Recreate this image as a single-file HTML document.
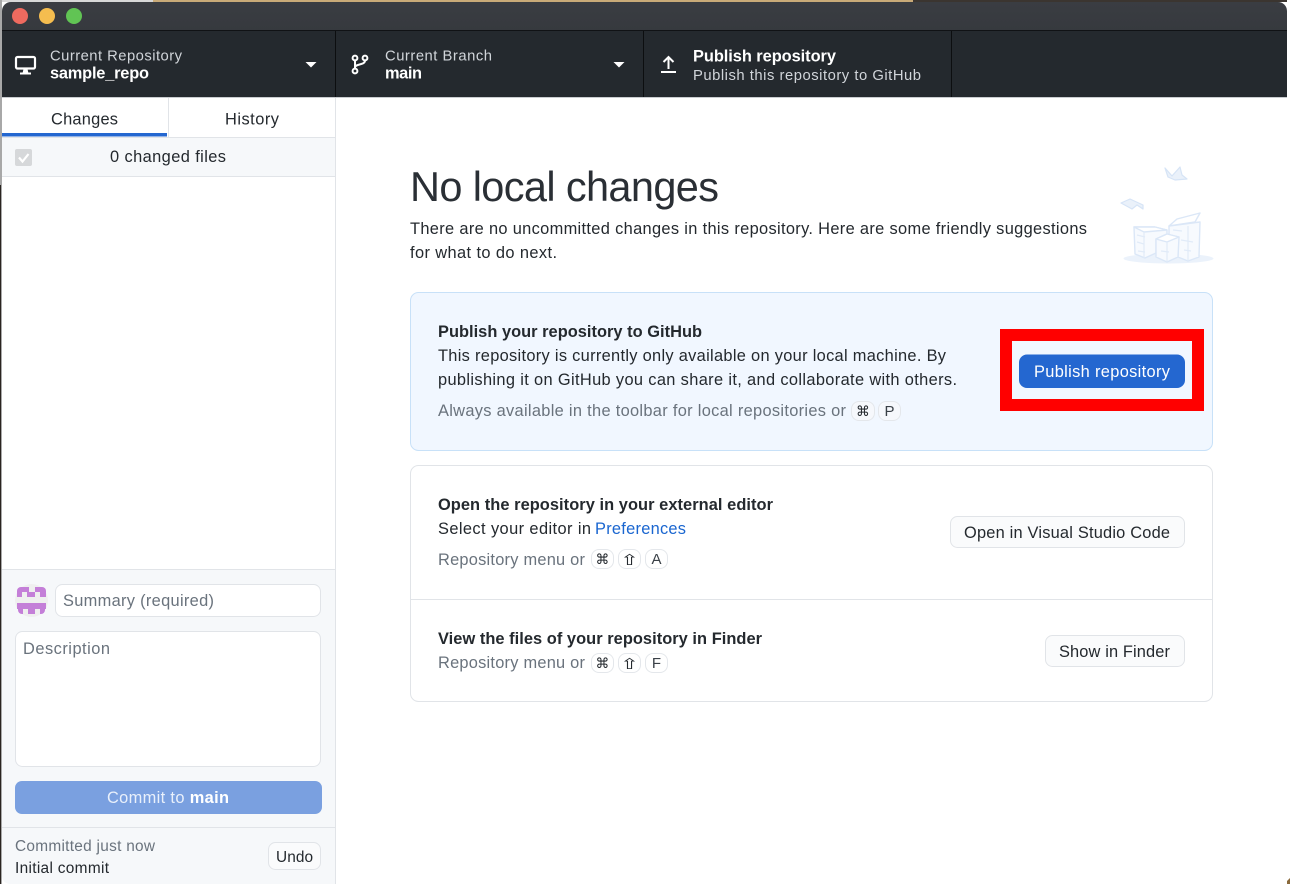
<!DOCTYPE html>
<html lang="en">
<head>
<meta charset="utf-8">
<title>GitHub Desktop</title>
<style>
html,body{margin:0;padding:0;background:#fff;width:1290px;height:884px;overflow:hidden}
svg{display:block;position:absolute;left:0;top:0}
text{font-family:"Liberation Sans","DejaVu Sans",sans-serif;font-size:16.4px;fill:#24292e}
.b{font-weight:700}
.g{fill:#6a737d}
.w{fill:#fff}
.l{fill:#d1d5da}
.k{font-size:14px;text-anchor:middle;font-family:"DejaVu Sans","Liberation Sans",sans-serif}
.s{font-size:15px;font-family:"Liberation Sans",sans-serif;fill:#3a4047;text-anchor:middle}
</style>
</head>
<body>
<svg width="1290" height="884" viewBox="0 0 1290 884" xmlns="http://www.w3.org/2000/svg">
<defs>
<linearGradient id="tb" x1="0" y1="0" x2="0" y2="1"><stop offset="0" stop-color="#3a3d42"/><stop offset="1" stop-color="#2d3035"/></linearGradient>
</defs>
<!-- desktop strip behind window -->
<rect x="0" y="0" width="153" height="2" fill="#d8d8d8"/>
<rect x="153" y="0" width="760" height="2" fill="#c9aa78"/>
<rect x="913" y="0" width="374" height="2" fill="#3b3530"/>
<rect x="0" y="0" width="2" height="884" fill="#a8a8a8"/>
<rect x="0" y="185" width="1" height="699" fill="#2a2420"/>
<path d="M1284 884l6-6v6Z" fill="#8a6a3c"/>
<!-- window -->
<path d="M2 11a9 9 0 0 1 9-9H1278a9 9 0 0 1 9 9V98H2Z" fill="url(#tb)"/>
<rect x="2" y="30" width="1285" height="1" fill="#101215"/>
<rect x="2" y="31" width="1285" height="66" fill="#24292e"/>
<rect x="2" y="97" width="1285" height="1" fill="#c9ccd0"/>
<path d="M2 98H1287V884H10a8 8 0 0 1-8-8Z" fill="#fff"/>
<circle cx="20" cy="16" r="8" fill="#ee6a5f"/>
<circle cx="47" cy="16" r="8" fill="#f5bd4f"/>
<circle cx="74" cy="16" r="8" fill="#61c454"/>
<rect x="335" y="31" width="1" height="66" fill="#0c0e10"/>
<rect x="643" y="31" width="1" height="66" fill="#0c0e10"/>
<rect x="951" y="31" width="1" height="66" fill="#0c0e10"/>

<!-- repo toolbar -->
<g fill="none" stroke="#fff" stroke-width="2.200">
<rect x="16" y="57" width="19" height="11.500" rx="1.500"/>
</g>
<path d="M23.500 69h4l.8 3.500h2.700v2h-11v-2h2.700Z" fill="#fff"/>
<text x="50" y="60.500" class="l" textLength="132" lengthAdjust="spacing" style="font-size:14.800px">Current Repository</text>
<text x="50" y="78.500" class="w b" textLength="99" lengthAdjust="spacing">sample_repo</text>
<path d="M305.500 62h11l-5.500 5.500Z" fill="#fff"/>

<!-- branch toolbar -->
<g fill="none" stroke="#fff" stroke-width="2">
<circle cx="355" cy="58" r="2.400"/>
<circle cx="365" cy="58" r="2.400"/>
<circle cx="355" cy="71" r="2.400"/>
<path d="M355 60.500v8M365 60.500c0 5-10 3-10 7"/>
</g>
<text x="385" y="60.500" class="l" textLength="107" lengthAdjust="spacing" style="font-size:14.800px">Current Branch</text>
<text x="385" y="78.500" class="w b" textLength="37" lengthAdjust="spacing">main</text>
<path d="M613.500 62h11l-5.500 5.500Z" fill="#fff"/>

<!-- publish toolbar -->
<path d="M668.500 69V57M663.500 62l5-5 5 5" fill="none" stroke="#fff" stroke-width="2"/>
<rect x="661" y="71" width="15" height="2" fill="#fff"/>
<text x="693" y="61.500" class="w b" textLength="143" lengthAdjust="spacing">Publish repository</text>
<text x="693" y="80" class="l" textLength="228" lengthAdjust="spacing" style="font-size:14.800px">Publish this repository to GitHub</text>

<!-- sidebar -->
<rect x="335" y="98" width="1" height="786" fill="#e1e4e8"/>
<rect x="168" y="98" width="1" height="39" fill="#e1e4e8"/>
<rect x="2" y="133" width="165" height="3.500" fill="#2467d0"/>
<rect x="2" y="137" width="333" height="1" fill="#e1e4e8"/>
<rect x="2" y="138" width="333" height="38" fill="#f6f8fa"/>
<rect x="2" y="176" width="333" height="1" fill="#e1e4e8"/>
<text x="51" y="124.500" textLength="67" lengthAdjust="spacing">Changes</text>
<text x="225" y="124.500" textLength="54" lengthAdjust="spacing">History</text>
<rect x="15" y="149" width="17" height="17" rx="2" fill="#d6d8da"/>
<path d="M19 157.500l3.500 4 6-7.500" fill="none" stroke="#fff" stroke-width="2.200"/>
<text x="110" y="162" textLength="116" lengthAdjust="spacing">0 changed files</text>

<!-- commit area -->
<path d="M2 569H335V884H10a8 8 0 0 1-8-8Z" fill="#f6f8fa"/>
<rect x="2" y="569" width="333" height="1" fill="#e1e4e8"/>
<circle cx="31.500" cy="600.500" r="16.500" fill="#efefef"/>
<g fill="#c47fd8">
<path d="M23 587h6v5h-12v-1a4 4 0 0 1 4-4Z"/>
<path d="M35 587h7a4 4 0 0 1 4 4v1h-11Z"/>
<rect x="17" y="592" width="5" height="5"/>
<rect x="27" y="592" width="8" height="5"/>
<rect x="40" y="592" width="6" height="5"/>
<rect x="17" y="603" width="29" height="6"/>
<path d="M18 609h5v5h-1a4 4 0 0 1-4-4Z"/>
<rect x="28" y="609" width="7" height="5"/>
<path d="M40 609h5v1a4 4 0 0 1-4 4h-1Z"/>
</g>
<rect x="55.500" y="584.500" width="265" height="32" rx="7" fill="#fff" stroke="#e1e4e8"/>
<text x="63" y="606" class="g" textLength="151" lengthAdjust="spacing">Summary (required)</text>
<rect x="15.500" y="631.500" width="305" height="135" rx="7" fill="#fff" stroke="#e1e4e8"/>
<text x="23" y="654" class="g" textLength="87" lengthAdjust="spacing">Description</text>
<rect x="15" y="781" width="307" height="33" rx="7" fill="#7aa0e0"/>
<text x="107" y="803" style="fill:#e9f0fb" textLength="122" lengthAdjust="spacing">Commit to <tspan class="b" style="fill:#fff">main</tspan></text>
<rect x="2" y="827" width="333" height="1" fill="#e1e4e8"/>
<text x="15" y="851" class="g" textLength="140" lengthAdjust="spacing" style="font-size:15.400px">Committed just now</text>
<text x="15" y="873" textLength="94" lengthAdjust="spacing" style="font-size:15.400px">Initial commit</text>
<rect x="268.500" y="842.500" width="52" height="27" rx="7" fill="#fafbfc" stroke="#e1e4e8"/>
<text x="276" y="862" textLength="37" lengthAdjust="spacing" style="font-size:15.400px">Undo</text>

<!-- main heading -->
<text x="410" y="201" textLength="309" lengthAdjust="spacing" style="font-size:41.500px;fill:#2a2f35">No local changes</text>
<text x="410" y="234" textLength="677" lengthAdjust="spacing">There are no uncommitted changes in this repository. Here are some friendly suggestions</text>
<text x="410" y="258" textLength="147" lengthAdjust="spacing">for what to do next.</text>

<!-- illustration -->
<ellipse cx="1168.500" cy="258.500" rx="45" ry="5" fill="#ebf2fb"/>
<g fill="#f7fafe" stroke="#dbe7f7" stroke-width="1.400" stroke-linejoin="round">
<path d="M1169 226l8-7 23-6-5 9Z" fill="#fff"/>
<path d="M1169 226l31-4-1 35-11 4-10-4v-18l-9-3Z"/>
<path d="M1134 227l21 0 12 3v4l-11 5v14l-11 5-10-4Z"/>
<path d="M1134 227l10 5 23-2-12-3Z" fill="#fff"/>
<path d="M1156 239l11-5 12 3-1 20-11 5-11-5Z"/>
<path d="M1156 239l11 3 12-5-12-3Z" fill="#fff"/>
</g>
<g fill="#eaf1fa" stroke="#d6e4f6" stroke-width="1.200" stroke-linejoin="round">
<path d="M1165 168l7 8 8-9 2 8 5 4-12 1-7-3Z"/>
<path d="M1121 203l9-4 13 6v4l-6-4-5 4Z"/>
</g>
<g fill="none" stroke="#e1ebf8" stroke-width="1.200">
<path d="M1137 235l8 2M1137 242l7 2M1138 251l7 1M1173 230l9 1M1181 240l12 2M1184 250l7 1M1161 251l8 1"/>
<path d="M1144 232v26M1167 242v20M1188 226v35"/>
</g>

<!-- publish card -->
<rect x="410.500" y="292.500" width="802" height="158" rx="8" fill="#f1f7ff" stroke="#c8e1f8"/>
<text x="438" y="337" class="b" textLength="264" lengthAdjust="spacing">Publish your repository to GitHub</text>
<text x="438" y="361" textLength="508" lengthAdjust="spacing">This repository is currently only available on your local machine. By</text>
<text x="438" y="385" textLength="519" lengthAdjust="spacing">publishing it on GitHub you can share it, and collaborate with others.</text>
<text x="438" y="416" class="g" textLength="408" lengthAdjust="spacing">Always available in the toolbar for local repositories or</text>
<rect x="851.500" y="401.500" width="23" height="19" rx="7.500" fill="#f6f8fc" stroke="#e4e7eb"/>
<text x="863" y="416" class="k">⌘</text>
<rect x="878.500" y="401.500" width="22" height="19" rx="7.500" fill="#f6f8fc" stroke="#e4e7eb"/>
<text x="889.500" y="416" class="s">P</text>

<!-- red annotation -->
<rect x="1006" y="335" width="192" height="70" fill="#f1f7ff" stroke="#ff0000" stroke-width="12"/>
<rect x="1019" y="354.500" width="166" height="33.500" rx="8" fill="#2467d0"/>
<text x="1034" y="377" class="w" textLength="136" lengthAdjust="spacing">Publish repository</text>

<!-- actions card -->
<rect x="410.500" y="465.500" width="802" height="236" rx="8" fill="#fff" stroke="#e1e4e8"/>
<rect x="411" y="599" width="801" height="1" fill="#e1e4e8"/>
<text x="438" y="510" class="b" textLength="335" lengthAdjust="spacing">Open the repository in your external editor</text>
<text x="438" y="534" textLength="153" lengthAdjust="spacing">Select your editor in</text>
<text x="595" y="534" textLength="91" lengthAdjust="spacing" style="fill:#1a66d0">Preferences</text>
<text x="438" y="565" class="g" textLength="147" lengthAdjust="spacing">Repository menu or</text>
<rect x="591.500" y="549.500" width="22" height="19" rx="7.500" fill="#fff" stroke="#e4e7eb"/>
<text x="602.500" y="564" class="k">⌘</text>
<rect x="618.500" y="549.500" width="22" height="19" rx="7.500" fill="#fff" stroke="#e4e7eb"/>
<text transform="translate(629.500 565) scale(1.500 1)" class="k" style="font-size:15px">⇧</text>
<rect x="645.500" y="549.500" width="22" height="19" rx="7.500" fill="#fff" stroke="#e4e7eb"/>
<text x="656.500" y="564" class="s">A</text>
<rect x="950.500" y="516.500" width="234" height="31" rx="7" fill="#fafbfc" stroke="#e1e4e8"/>
<text x="964" y="538" textLength="206" lengthAdjust="spacing">Open in Visual Studio Code</text>

<text x="438" y="644" class="b" textLength="324" lengthAdjust="spacing">View the files of your repository in Finder</text>
<text x="438" y="668" class="g" textLength="147" lengthAdjust="spacing">Repository menu or</text>
<rect x="591.500" y="653.500" width="22" height="19" rx="7.500" fill="#fff" stroke="#e4e7eb"/>
<text x="602.500" y="668" class="k">⌘</text>
<rect x="618.500" y="653.500" width="22" height="19" rx="7.500" fill="#fff" stroke="#e4e7eb"/>
<text transform="translate(629.500 669) scale(1.500 1)" class="k" style="font-size:15px">⇧</text>
<rect x="645.500" y="653.500" width="22" height="19" rx="7.500" fill="#fff" stroke="#e4e7eb"/>
<text x="656.500" y="668" class="s">F</text>
<rect x="1045.500" y="635.500" width="139" height="31" rx="7" fill="#fafbfc" stroke="#e1e4e8"/>
<text x="1059" y="657" textLength="111" lengthAdjust="spacing">Show in Finder</text>
</svg>
</body>
</html>
